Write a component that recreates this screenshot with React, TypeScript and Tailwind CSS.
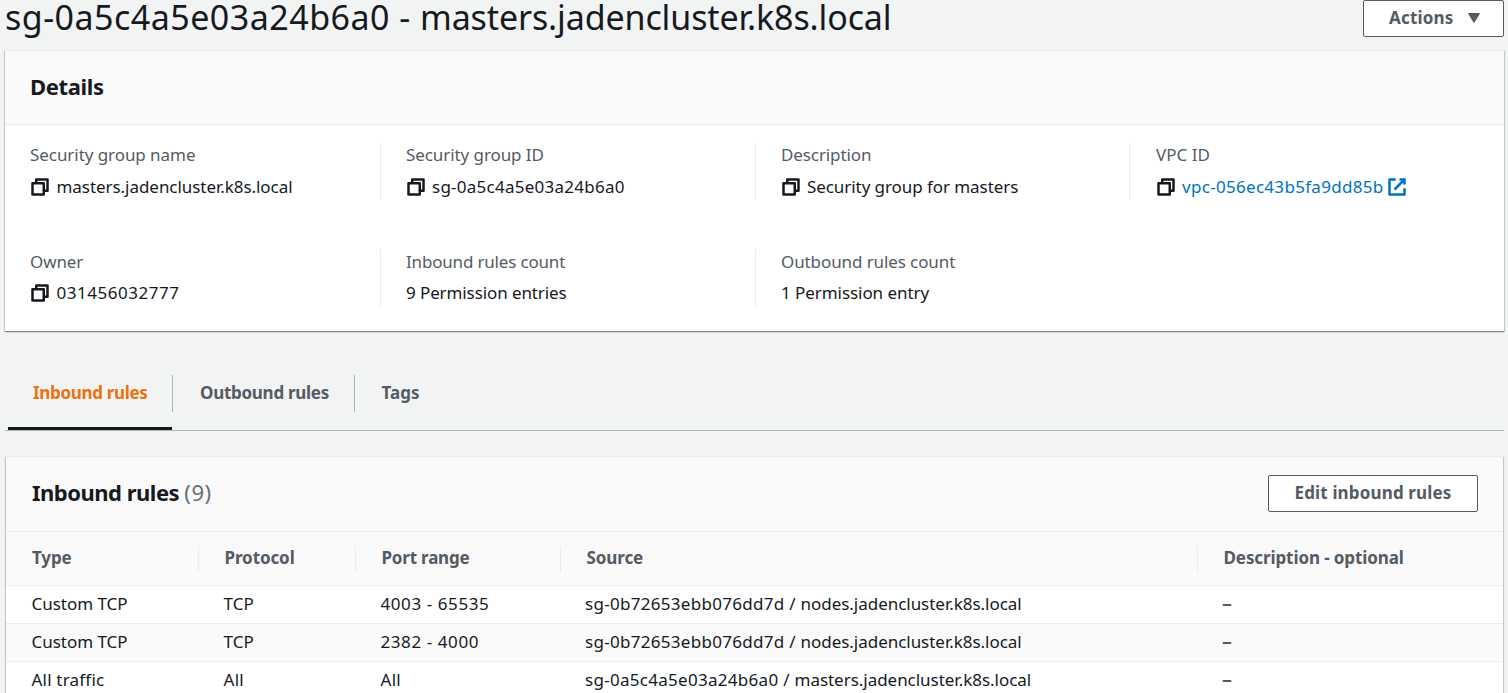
import type { ReactNode } from "react";

function CopyIcon() {
  return (
    <svg viewBox="0 0 16 16" className="size-5 shrink-0" fill="none" stroke="#16191f" strokeWidth="2" strokeLinejoin="round">
      <path d="M2 5h9v9H2z" />
      <path d="M5 5V2h9v9h-3" />
    </svg>
  );
}

function ExternalIcon() {
  return (
    <svg viewBox="0 0 16 16" className="size-5 shrink-0" fill="none" stroke="#0073bb" strokeWidth="2">
      <path d="M10 2h4v4" />
      <path d="M6 10l8-8" />
      <path d="M14 9.048V14H2V2h5" strokeLinejoin="round" />
    </svg>
  );
}

function Field({ label, boxClass = "border-l border-[#eaeded] pl-[25px]", labelClass = "", children }: { label: string; boxClass?: string; labelClass?: string; children: ReactNode }) {
  return (
    <div className={`h-[57px] ${boxClass}`}>
      <div className={`h-6 text-[17px] leading-6 text-[#545b64] ${labelClass}`}>{label}</div>
      <div className="mt-2 flex h-6 items-center text-[17px] leading-6">{children}</div>
    </div>
  );
}

const rules = [
  { type: "Custom TCP", typeClass: "tracking-[-0.02px]", protocol: "TCP", protocolClass: "tracking-[0.1px]", port: "4003 - 65535", portClass: "tracking-[0.58px]", group: "sg-0b72653ebb076dd7d", name: "nodes.jadencluster.k8s.local" },
  { type: "Custom TCP", typeClass: "tracking-[-0.02px]", protocol: "TCP", protocolClass: "tracking-[0.1px]", port: "2382 - 4000", portClass: "tracking-[0.58px]", group: "sg-0b72653ebb076dd7d", name: "nodes.jadencluster.k8s.local" },
  { type: "All traffic", typeClass: "tracking-[0.2px]", protocol: "All", protocolClass: "tracking-[0.3px]", port: "All", portClass: "tracking-[0.3px]", group: "sg-0a5c4a5e03a24b6a0", name: "masters.jadencluster.k8s.local" },
];

const columns = "grid grid-cols-[192px_157px_205px_637px_1fr]";
const cardShadow = "shadow-[0_1px_1px_0_rgba(0,28,36,0.3),1px_1px_1px_0_rgba(0,28,36,0.15),-1px_1px_1px_0_rgba(0,28,36,0.15)]";

export default function App() {
  return (
    <div className="h-[693px] overflow-hidden bg-[#f2f3f3] pl-[5px] pr-1 font-['Noto_Sans',sans-serif] text-[#16191f]">
      <header className="flex h-[50px] items-start justify-between">
        <h1 className="h-[38px] whitespace-nowrap text-[34px] leading-[34px] tracking-[-0.12px]">
          <span className="tracking-[0.48px]">sg-0a5c4a5e03a24b6a0 - </span>masters.jadencluster.k8s.local
        </h1>
        <button className="flex h-[37px] w-[141px] items-center rounded-[2px] border border-[#545b64] bg-white pb-[2px] pl-[25px] text-[17px] font-bold leading-6 tracking-[0.2px] text-[#545b64]">
          Actions
          <svg viewBox="0 0 14 12" className="ml-[13px] h-3 w-3.5" fill="#545b64" stroke="#545b64" strokeLinejoin="round">
            <path d="M1.5 1.5h11L7 10.5z" />
          </svg>
        </button>
      </header>

      <section className={`h-[281px] border-t border-[#eaeded] bg-white ${cardShadow}`}>
        <div className="flex h-[74px] items-center border-b border-[#eaeded] bg-[#fafafa] pb-1 pl-[25px]">
          <h2 className="text-[22px] font-bold leading-7 tracking-[-0.35px]">Details</h2>
        </div>
        <div className="grid grid-cols-[375px_375px_374px_1fr] gap-y-[49px] pt-[18px]">
          <Field label="Security group name" boxClass="pl-[25px]" labelClass="tracking-[-0.06px]">
            <CopyIcon />
            <span className="ml-[6.5px] tracking-[-0.05px]">masters.jadencluster.k8s.local</span>
          </Field>
          <Field label="Security group ID" labelClass="tracking-[-0.08px]">
            <CopyIcon />
            <span className="ml-1.5 tracking-[0.25px]">sg-0a5c4a5e03a24b6a0</span>
          </Field>
          <Field label="Description" labelClass="tracking-[-0.1px]">
            <CopyIcon />
            <span className="ml-1.5 tracking-[-0.07px]">Security group for masters</span>
          </Field>
          <Field label="VPC ID" boxClass="border-l border-[#eaeded] pl-[26px]">
            <CopyIcon />
            <a className="ml-1.5 flex items-center gap-[3px] text-[#0073bb]">
              <span className="tracking-[0.3px]">vpc-056ec43b5fa9dd85b</span>
              <ExternalIcon />
            </a>
          </Field>
          <Field label="Owner" boxClass="pl-[25px]" labelClass="pt-px tracking-[-0.1px]">
            <CopyIcon />
            <span className="ml-[6.5px] tracking-[0.52px]">031456032777</span>
          </Field>
          <Field label="Inbound rules count" labelClass="pt-px tracking-[-0.18px]">
            <span className="tracking-[-0.1px]">9 Permission entries</span>
          </Field>
          <Field label="Outbound rules count" labelClass="pt-px tracking-[-0.1px]">
            <span className="tracking-[-0.06px]">1 Permission entry</span>
          </Field>
        </div>
      </section>

      <nav className="mt-11 flex h-14 border-b border-[#aab7b8] pl-[3px] text-[17px] font-bold leading-6 text-[#545b64]">
        <div className="w-[164px] border-b-[3px] border-[#16191f] pl-[25px] pt-[6px] tracking-[-0.33px] text-[#ec7211]">Inbound rules</div>
        <div className="h-[37px] w-[182px] border-l border-[#aab7b8] pl-[27px] pt-[6px] tracking-[-0.28px]">Outbound rules</div>
        <div className="h-[37px] border-l border-[#aab7b8] pl-[26.5px] pt-[6px]">Tags</div>
      </nav>

      <section className={`mx-px mt-[25px] h-[400px] border-t border-[#eaeded] bg-white ${cardShadow}`}>
        <div className="flex h-[75px] items-center justify-between border-b border-[#eaeded] bg-[#fafafa] pb-[2px] pl-[26px] pr-[25px]">
          <h2 className="pb-[3px] text-[22px] font-bold leading-7 tracking-[-0.5px]">
            Inbound rules <span className="font-normal tracking-[0.5px] text-[#687078]">(9)</span>
          </h2>
          <button className="flex h-[37px] w-[210px] items-center justify-center rounded-[2px] border border-[#545b64] bg-white pb-px text-[17px] font-bold leading-6 tracking-[0.15px] text-[#545b64]">
            Edit inbound rules
          </button>
        </div>
        <div className={`${columns} h-[54px] items-center border-b border-[#eaeded] bg-[#fafafa] text-[17px] font-bold text-[#545b64]`}>
          <div className="pb-[3px] pl-[26px] leading-[23px] tracking-[-0.1px]">Type</div>
          <div className="border-l border-[#eaeded] pb-[3px] pl-[25.5px] leading-[23px] tracking-[-0.1px]">Protocol</div>
          <div className="border-l border-[#eaeded] pb-[3px] pl-[25.5px] leading-[23px] tracking-[-0.2px]">Port range</div>
          <div className="border-l border-[#eaeded] pb-[3px] pl-[25.5px] leading-[23px] tracking-[-0.1px]">Source</div>
          <div className="border-l border-[#eaeded] pb-[3px] pl-[25.5px] leading-[23px] tracking-[-0.1px]">Description - optional</div>
        </div>
        {rules.map((rule, i) => (
          <div key={i} className={`${columns} h-[38px] items-center border-b border-[#eaeded] pb-[2px] text-[17px] leading-6 ${i % 2 ? "bg-[#fafafa]" : "bg-white"}`}>
            <div className={`pl-[25.5px] ${rule.typeClass}`}>{rule.type}</div>
            <div className={`pl-[25.5px] ${rule.protocolClass}`}>{rule.protocol}</div>
            <div className={`pl-[25.5px] ${rule.portClass}`}>{rule.port}</div>
            <div className="pl-[25px] tracking-[-0.03px]">
              <span className="tracking-[0.29px]">{rule.group} / </span>
              {rule.name}
            </div>
            <div className="pl-[25px] font-bold text-[#545b64]"><span className="inline-block origin-left scale-x-115">–</span></div>
          </div>
        ))}
      </section>
    </div>
  );
}
